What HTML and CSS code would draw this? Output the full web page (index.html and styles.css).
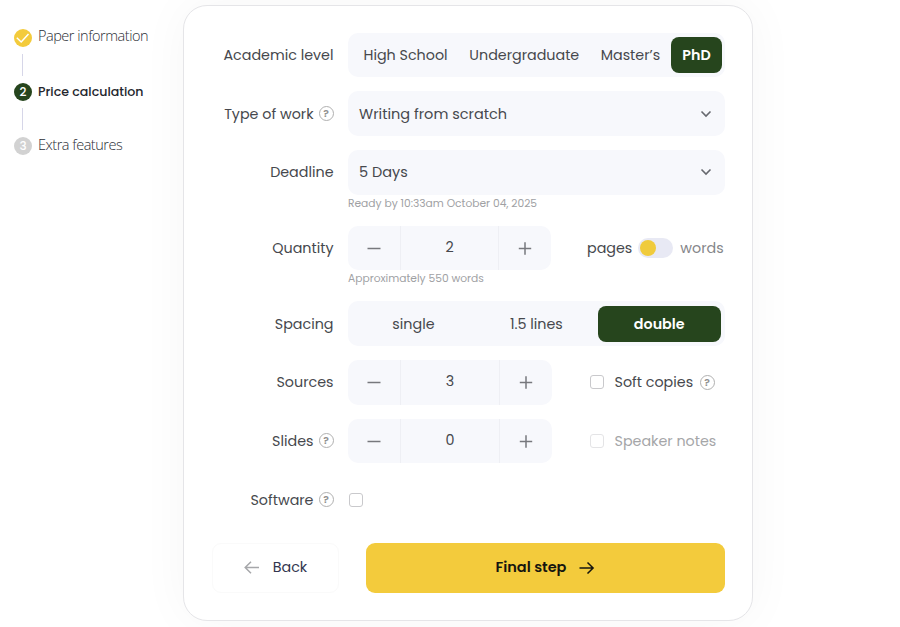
FILE: index.html
```html
<!DOCTYPE html>
<html lang="en">
<head>
    <meta charset="UTF-8">
    <meta name="viewport" content="width=device-width, initial-scale=1.0">
    <title>Price calculation</title>
    <link rel="stylesheet" href="styles.css">
</head>
<body>

    <!-- Steps -->
    <aside class="steps">
        <div class="step">
            <span class="dot done"><svg width="18" height="18" viewBox="0 0 18 18"><path d="M2.800 8.800l4.400 4.200 7.300-8"/></svg></span>
            <span class="step-name">Paper information</span>
        </div>
        <div class="line"></div>
        <div class="step active">
            <span class="dot">2</span>
            <span class="step-name">Price calculation</span>
        </div>
        <div class="line"></div>
        <div class="step">
            <span class="dot next">3</span>
            <span class="step-name">Extra features</span>
        </div>
    </aside>

    <!-- Order Form -->
    <main class="card">
        <div class="row">
            <div class="label">Academic level</div>
            <div class="field levels">
                <span class="level-high">High School</span>
                <span class="level-under">Undergraduate</span>
                <span class="level-master">Master’s</span>
                <span class="selected phd">PhD</span>
            </div>
        </div>

        <div class="row">
            <div class="label">Type of work <span class="help">?</span></div>
            <div class="field select">
                <span>Writing from scratch</span>
                <svg class="chevron" width="12" height="8" viewBox="0 0 12 8"><path d="M1.5 1.5L6 6l4.500-4.500"/></svg>
            </div>
        </div>

        <div class="row has-hint">
            <div class="label">Deadline</div>
            <div class="field select">
                <span>5 Days</span>
                <svg class="chevron" width="12" height="8" viewBox="0 0 12 8"><path d="M1.5 1.5L6 6l4.500-4.500"/></svg>
            </div>
        </div>
        <div class="hint">Ready by 10:33am October 04, 2025</div>

        <div class="row has-hint">
            <div class="label">Quantity</div>
            <div class="field counter quantity">
                <span class="btn"><svg width="14" height="14" viewBox="0 0 14 14"><path d="M.5 7.500h13"/></svg></span>
                <span class="value">2</span>
                <span class="btn"><svg width="14" height="14" viewBox="0 0 14 14"><path d="M.8 7.500h12.400M7 1.300v12.400"/></svg></span>
            </div>
            <div class="units">
                <span class="pages">pages</span>
                <span class="switch"></span>
                <span class="words">words</span>
            </div>
        </div>
        <div class="hint">Approximately 550 words</div>

        <div class="row">
            <div class="label">Spacing</div>
            <div class="field spacing">
                <span>single</span>
                <span>1.5 lines</span>
                <span class="selected">double</span>
            </div>
        </div>

        <div class="row">
            <div class="label">Sources</div>
            <div class="field counter">
                <span class="btn"><svg width="14" height="14" viewBox="0 0 14 14"><path d="M.5 7.500h13"/></svg></span>
                <span class="value">3</span>
                <span class="btn"><svg width="14" height="14" viewBox="0 0 14 14"><path d="M.8 7.500h12.400M7 1.300v12.400"/></svg></span>
            </div>
            <div class="option"><span class="check"></span><span class="option-name">Soft copies</span><span class="help">?</span></div>
        </div>

        <div class="row">
            <div class="label">Slides <span class="help">?</span></div>
            <div class="field counter">
                <span class="btn"><svg width="14" height="14" viewBox="0 0 14 14"><path d="M.5 7.500h13"/></svg></span>
                <span class="value">0</span>
                <span class="btn"><svg width="14" height="14" viewBox="0 0 14 14"><path d="M.8 7.500h12.400M7 1.300v12.400"/></svg></span>
            </div>
            <div class="option disabled"><span class="check"></span><span class="option-name">Speaker notes</span></div>
        </div>

        <div class="row">
            <div class="label">Software <span class="help">?</span></div>
            <span class="check software"></span>
        </div>

        <div class="actions">
            <div class="back">
                <svg width="16" height="14" viewBox="0 0 16 14"><path d="M15 7.500H1.500M7 1.700L1.200 7.500 7 13.300"/></svg>
                <span>Back</span>
            </div>
            <div class="final">
                <span>Final step</span>
                <svg width="16" height="14" viewBox="0 0 16 14"><path d="M.5 8h13.500M8.500 2.500L14.100 8 8.500 13.500"/></svg>
            </div>
        </div>
    </main>

</body>
</html>
```
FILE: styles.css
```css
/* Global Styles */
* {
    margin: 0;
    padding: 0;
    box-sizing: border-box;
}
body {
    display: flex;
    height: 627px;
    overflow: hidden;
    background: #fff;
    color: #46484d;
    font-family: Poppins, Inter, sans-serif;
    font-size: 14.3px;
    line-height: 20px;
    white-space: nowrap;
}
svg {
    display: block;
    fill: none;
    stroke: currentColor;
}

/* Steps */
.steps {
    width: 183px;
    flex: none;
    padding: 28.5px 0 0 14px;
}
.step {
    display: flex;
    align-items: center;
    gap: 6px;
    height: 18px;
    color: #2c2e36;
    font-family: "Open Sans", sans-serif;
    font-size: 14.5px;
    font-weight: 300;
    letter-spacing: -0.48px;
}
.step-name {
    margin-bottom: 2.5px;
}
.step.active {
    color: #24262d;
    font-family: Poppins, Inter, sans-serif;
    font-size: 12.6px;
    font-weight: 500;
    letter-spacing: 0;
}
.step.active .step-name {
    margin-bottom: 0;
}
.dot {
    width: 18px;
    height: 18px;
    flex: none;
    border-radius: 50%;
    background: #26451d;
    color: #fff;
    font: 500 12px/18px Poppins, Inter, sans-serif;
    text-align: center;
    letter-spacing: 0;
}
.dot.done {
    background: #f3cb3c;
    stroke-width: 1.5;
}
.dot.next {
    background: #d2d2d2;
}
.line {
    width: 1px;
    height: 22px;
    margin: 7px 0 7.4px 8px;
    background: #d6d6e8;
}

/* Card */
.card {
    width: 570px;
    height: 616px;
    flex: none;
    margin-top: 5px;
    padding: 26.5px 27px 0 28px;
    border: 1px solid #e5e5e8;
    border-radius: 24px;
    background: #fff;
    box-shadow: 0 0 50px rgba(0, 0, 0, 0.04);
}
.row {
    display: flex;
    align-items: center;
    height: 44.7px;
    margin-bottom: 14px;
}
.row.has-hint {
    margin-bottom: 0;
}
.label {
    display: flex;
    align-items: center;
    justify-content: flex-end;
    gap: 5px;
    width: 121.500px;
    margin-right: 14.500px;
    flex: none;
}
.help {
    width: 15px;
    height: 15px;
    border: 1px solid #b0b0b0;
    border-radius: 50%;
    color: #909090;
    font-size: 10.5px;
    font-weight: 600;
    line-height: 14px;
    text-align: center;
}
.field {
    display: flex;
    align-items: center;
    width: 377px;
    height: 44.7px;
    border-radius: 10px;
    background: #f7f8fc;
}
.hint {
    height: 31px;
    padding-left: 136px;
    color: #a0a1a4;
    font-size: 10.7px;
    line-height: 18px;
}

/* Segments */
.levels {
    padding: 0 3px 0 15.5px;
}
.level-high {
    width: 106px;
}
.level-under {
    width: 131.5px;
}
.level-master {
    width: 70.5px;
}
.selected {
    height: 36px;
    border-radius: 8px;
    background: #26451d;
    color: #fff;
    font-weight: 600;
    line-height: 36px;
    text-align: center;
}
.phd {
    width: 51px;
}
.spacing {
    padding: 0 4px;
}
.spacing span {
    width: 122.900px;
    text-align: center;
}

/* Select */
.select {
    justify-content: space-between;
    padding: 0 13px 0 11px;
    font-size: 14.5px;
}
.chevron {
    color: #66686e;
    stroke-width: 1.6;
}

/* Counter */
.counter {
    width: 204px;
}
.counter .btn {
    display: flex;
    align-items: center;
    justify-content: center;
    width: 52px;
    height: 100%;
    color: #77787d;
    stroke-width: 1.5;
}
.counter .value {
    width: 100px;
    height: 100%;
    border: solid #eeeff4;
    border-width: 0 1px;
    line-height: 43px;
    text-align: center;
}
.quantity {
    width: 203px;
}
.quantity .value {
    width: 99px;
}
.units {
    display: flex;
    align-items: center;
    margin-left: 36px;
}
.switch {
    width: 35px;
    height: 20px;
    margin: 0 7px 0 6px;
    padding: 2px 1.5px;
    border-radius: 10px;
    background: #e8e9f4;
}
.switch::before {
    content: '';
    display: block;
    width: 16px;
    height: 16px;
    border-radius: 50%;
    background: #f0cb3c;
}
.words {
    color: #85868a;
}

/* Checkboxes */
.option {
    display: flex;
    align-items: center;
    margin-left: 38px;
}
.check {
    width: 14px;
    height: 14px;
    border: 1px solid #c9c9cc;
    border-radius: 3px;
}
.option-name {
    margin: 0 6.5px 0 10.5px;
}
.disabled {
    color: #a5a6a8;
}
.disabled .check {
    border-color: #e4e4e6;
}
.software {
    margin-left: 1px;
}

/* Buttons */
.actions {
    display: flex;
    justify-content: space-between;
    padding-top: 7.300px;
}
.back,
.final {
    display: flex;
    align-items: center;
    justify-content: center;
    gap: 13px;
    height: 50px;
    padding-bottom: 2px;
    border-radius: 9px;
}
.back {
    width: 127px;
    border: 1px solid #fafafa;
    color: #33364f;
}
.back svg {
    color: #a6a7aa;
    stroke-width: 1.5;
}
.final {
    width: 359px;
    background: #f3cb3c;
    color: #15150f;
    font-size: 14.5px;
    font-weight: 600;
}
.final svg {
    stroke-width: 1.5;
}
```
